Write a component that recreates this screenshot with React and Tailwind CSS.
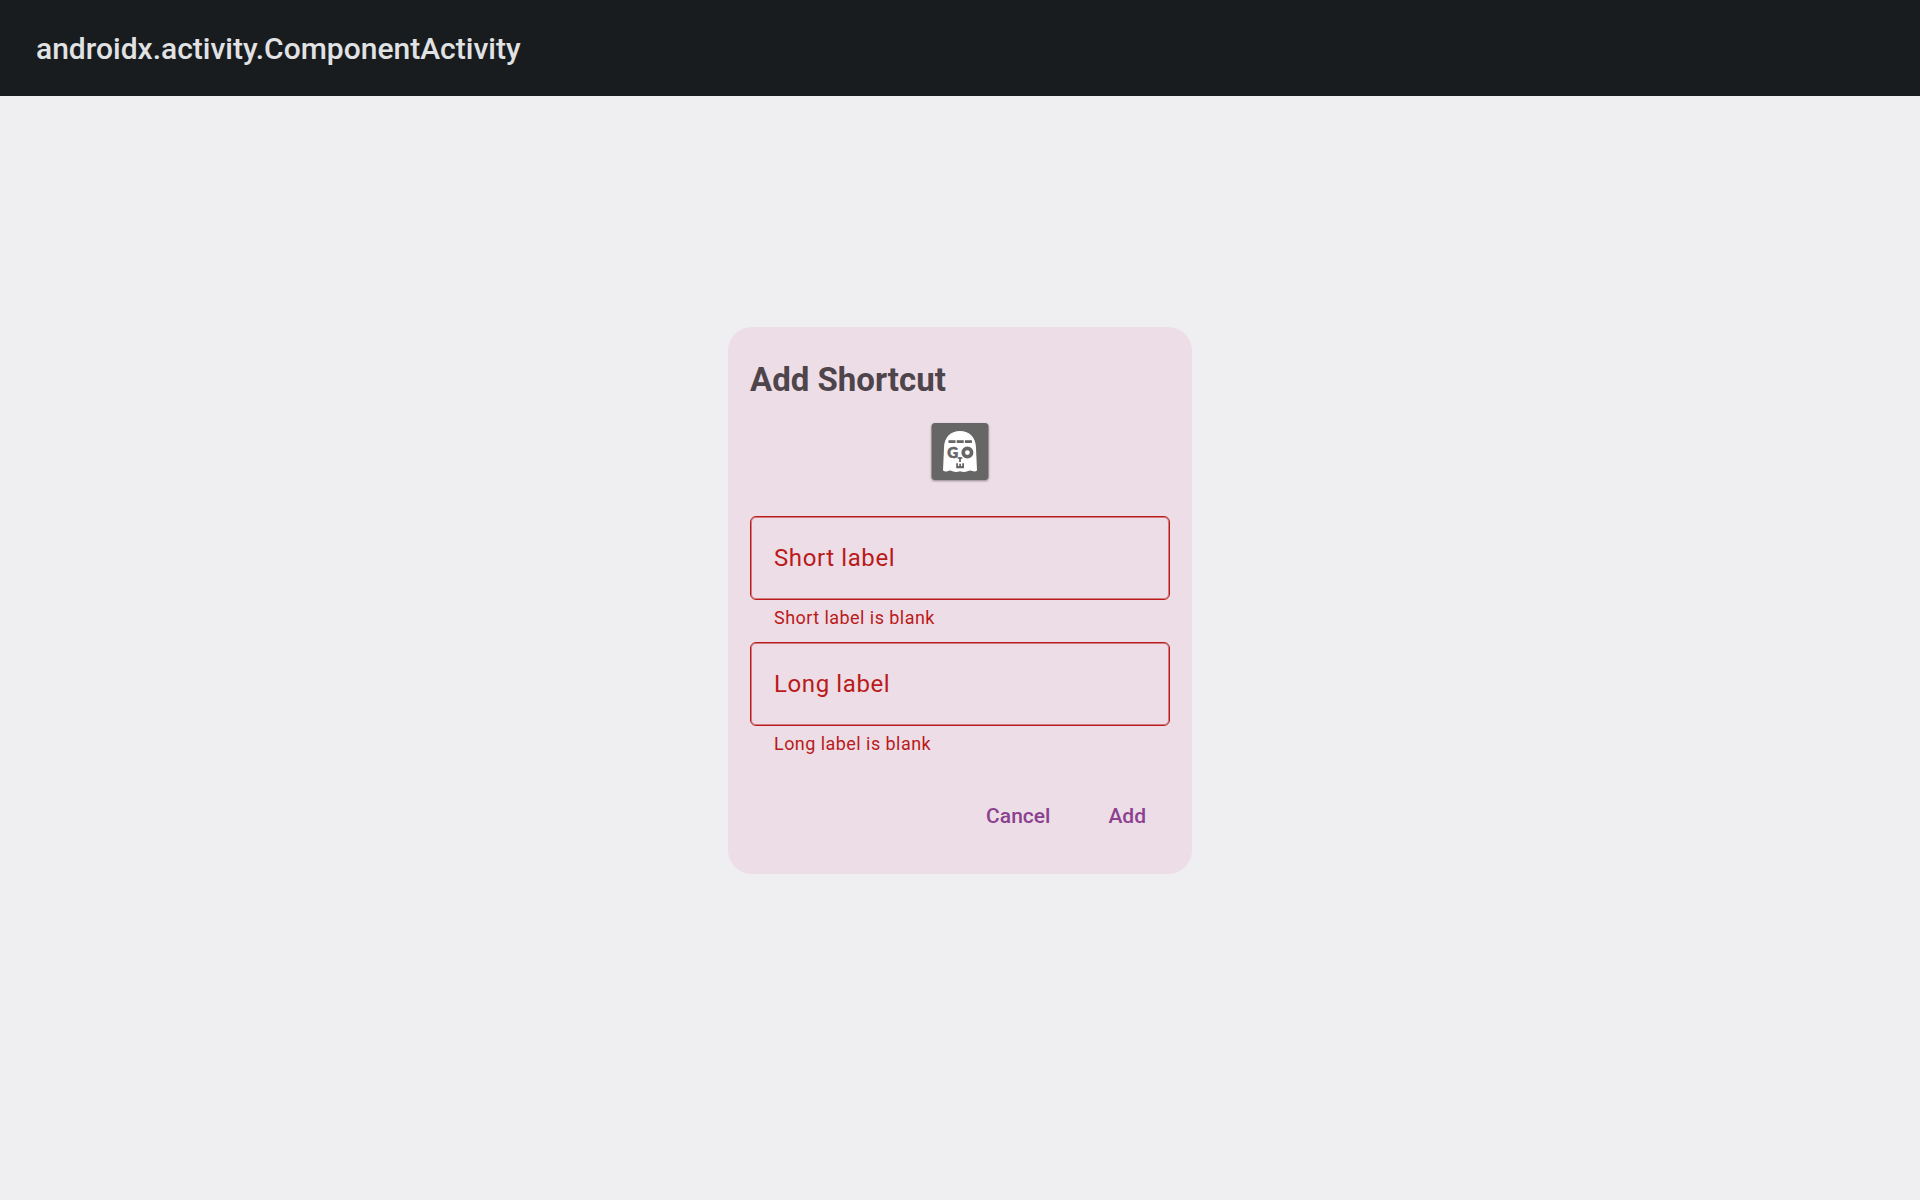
import { useState } from "react";

function AppIcon() {
  return (
    <svg viewBox="0 0 80 80" className="size-20" role="img" aria-label="Shortcut icon">
      <defs>
        <filter id="tile-shadow" x="-20%" y="-20%" width="140%" height="140%">
          <feDropShadow dx="0" dy="1" stdDeviation="1" floodColor="#000000" floodOpacity="0.4" />
        </filter>
      </defs>
      <rect x="11.5" y="11" width="57" height="57" rx="3.5" fill="#666666" filter="url(#tile-shadow)" />
      <path
        d="M24 36C24 25.5 30.5 19 40 19S56 25.5 56 36L57 58.5Q55 60 52.5 59Q50 57.8 47.5 59.2Q44 60.8 40 59.2Q36 60.8 32.5 59.2Q30 57.8 27.5 59.2Q25 60 23 58.5Z"
        fill="#ffffff"
      />
      <g fill="#666666">
        <rect x="28.5" y="28.2" width="7" height="2.8" />
        <rect x="36.7" y="28.2" width="7" height="2.8" />
        <rect x="44.9" y="28.2" width="7" height="2.8" />
        <rect x="37.7" y="45.2" width="4.6" height="1.6" />
        <rect x="39.1" y="45.2" width="1.8" height="4.8" />
        <path d="M36.2 51.2h1.8v2.9h1.2v-2.4h1.8v2.4h1.2v-2.9h1.8v5h-7.8z" />
        <text
          x="32.8"
          y="46"
          textAnchor="middle"
          fontFamily="Lato, sans-serif"
          fontSize="15"
          fontWeight="900"
          stroke="#666666"
          strokeWidth="0.6"
        >
          G
        </text>
      </g>
      <circle cx="47.4" cy="40.6" r="4.2" fill="none" stroke="#666666" strokeWidth="3.6" />
    </svg>
  );
}

function LabelField({ id, label }) {
  const [value, setValue] = useState("");
  const blank = value.trim() === "";
  return (
    <div className="text-[#ba1a1a]">
      <div className="grid">
        <input
          id={id}
          value={value}
          onChange={(e) => setValue(e.target.value)}
          aria-invalid={blank}
          aria-describedby={id + "-error"}
          className="col-start-1 row-start-1 h-[84px] w-full rounded-md border border-[#ba1a1a] bg-transparent px-6 text-2xl tracking-wide outline-none ring-1 ring-[#ba1a1a]/50 ring-inset"
        />
        {value === "" && (
          <label
            htmlFor={id}
            className="pointer-events-none col-start-1 row-start-1 self-center px-6 text-2xl tracking-wide"
          >
            {label}
          </label>
        )}
      </div>
      <p id={id + "-error"} className="px-6 pt-1 text-lg tracking-wide">
        {blank ? label + " is blank" : ""}
      </p>
    </div>
  );
}

export default function App() {
  return (
    <div className="min-h-screen bg-[#efeff1] font-['Roboto',sans-serif]">
      <header className="flex h-24 items-center bg-[#191c1e] px-9 pt-0.5">
        <h1 className="text-3xl font-medium text-[#e1e2e4]">androidx.activity.ComponentActivity</h1>
      </header>
      <div className="fixed inset-0 grid place-items-center">
        <form
          role="dialog"
          aria-labelledby="dialog-title"
          onSubmit={(e) => e.preventDefault()}
          className="flex w-[464px] flex-col rounded-3xl bg-[#eddde6] px-[22px] pt-8 pb-[22px]"
        >
          <h2 id="dialog-title" className="text-[33px] leading-[42px] font-bold text-[#4e444b]">
            Add Shortcut
          </h2>
          <div className="flex justify-center pt-[11px] pb-6">
            <AppIcon />
          </div>
          <div className="flex flex-col gap-2.5">
            <LabelField id="short-label" label="Short label" />
            <LabelField id="long-label" label="Long label" />
          </div>
          <div className="flex justify-end gap-2.5 pt-6 text-[21px] font-medium text-[#8b418f]">
            <button type="button" className="h-[70px] rounded-full px-6">
              Cancel
            </button>
            <button type="submit" className="h-[70px] rounded-full px-6">
              Add
            </button>
          </div>
        </form>
      </div>
    </div>
  );
}
